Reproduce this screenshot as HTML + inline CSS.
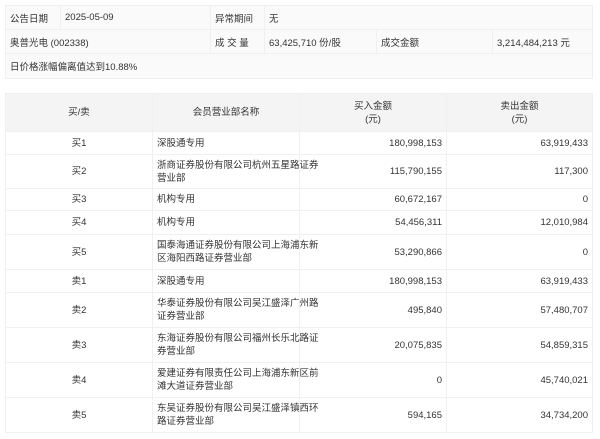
<!DOCTYPE html>
<html><head><meta charset="utf-8"><style>
body{margin:0;background:#fff;width:600px;height:439px;overflow:hidden;font-family:"Liberation Sans","Noto Sans CJK SC",sans-serif;font-size:9.5px;color:#333}
table{border-collapse:collapse;position:absolute;left:5px;width:588px;table-layout:fixed}
td{border:1px solid #f0f0f0;padding:0 4px;white-space:nowrap}
#t1{top:5px;background:#fafafa}
#t1 td{height:23px}
#t2{top:93px}
#t2 td{line-height:13px}
#t2 .h td{background:#f4f4f4;text-align:center;height:37px}
.c{text-align:center}.r{text-align:right}
</style></head><body>
<table id="t1">
<colgroup><col style="width:55px"><col style="width:150px"><col style="width:54px"><col style="width:112px"><col style="width:116px"><col></colgroup>
<tr><td>公告日期</td><td>2025-05-09</td><td>异常期间</td><td colspan="3">无</td></tr>
<tr><td colspan="2">奥普光电 (002338)</td><td>成 交 量</td><td>63,425,710 份/股</td><td>成交金额</td><td>3,214,484,213 元</td></tr>
<tr><td colspan="6" style="height:24px">日价格涨幅偏离值达到10.88%</td></tr>
</table>
<table id="t2">
<colgroup><col style="width:147px"><col style="width:147px"><col style="width:147px"><col></colgroup>
<tr class="h"><td>买/卖</td><td>会员营业部名称</td><td>买入金额<br>(元)</td><td>卖出金额<br>(元)</td></tr>
<tr style="height:23px"><td class="c">买1</td><td>深股通专用</td><td class="r">180,998,153</td><td class="r">63,919,433</td></tr>
<tr style="height:34px"><td class="c">买2</td><td>浙商证券股份有限公司杭州五星路证券<br>营业部</td><td class="r">115,790,155</td><td class="r">117,300</td></tr>
<tr style="height:22px"><td class="c">买3</td><td>机构专用</td><td class="r">60,672,167</td><td class="r">0</td></tr>
<tr style="height:24px"><td class="c">买4</td><td>机构专用</td><td class="r">54,456,311</td><td class="r">12,010,984</td></tr>
<tr style="height:35px"><td class="c">买5</td><td>国泰海通证券股份有限公司上海浦东新<br>区海阳西路证券营业部</td><td class="r">53,290,866</td><td class="r">0</td></tr>
<tr style="height:23px"><td class="c">卖1</td><td>深股通专用</td><td class="r">180,998,153</td><td class="r">63,919,433</td></tr>
<tr style="height:35px"><td class="c">卖2</td><td>华泰证券股份有限公司吴江盛泽广州路<br>证券营业部</td><td class="r">495,840</td><td class="r">57,480,707</td></tr>
<tr style="height:35px"><td class="c">卖3</td><td>东海证券股份有限公司福州长乐北路证<br>券营业部</td><td class="r">20,075,835</td><td class="r">54,859,315</td></tr>
<tr style="height:35px"><td class="c">卖4</td><td>爱建证券有限责任公司上海浦东新区前<br>滩大道证券营业部</td><td class="r">0</td><td class="r">45,740,021</td></tr>
<tr style="height:35px"><td class="c">卖5</td><td>东吴证券股份有限公司吴江盛泽镇西环<br>路证券营业部</td><td class="r">594,165</td><td class="r">34,734,200</td></tr>
</table>
</body></html>
